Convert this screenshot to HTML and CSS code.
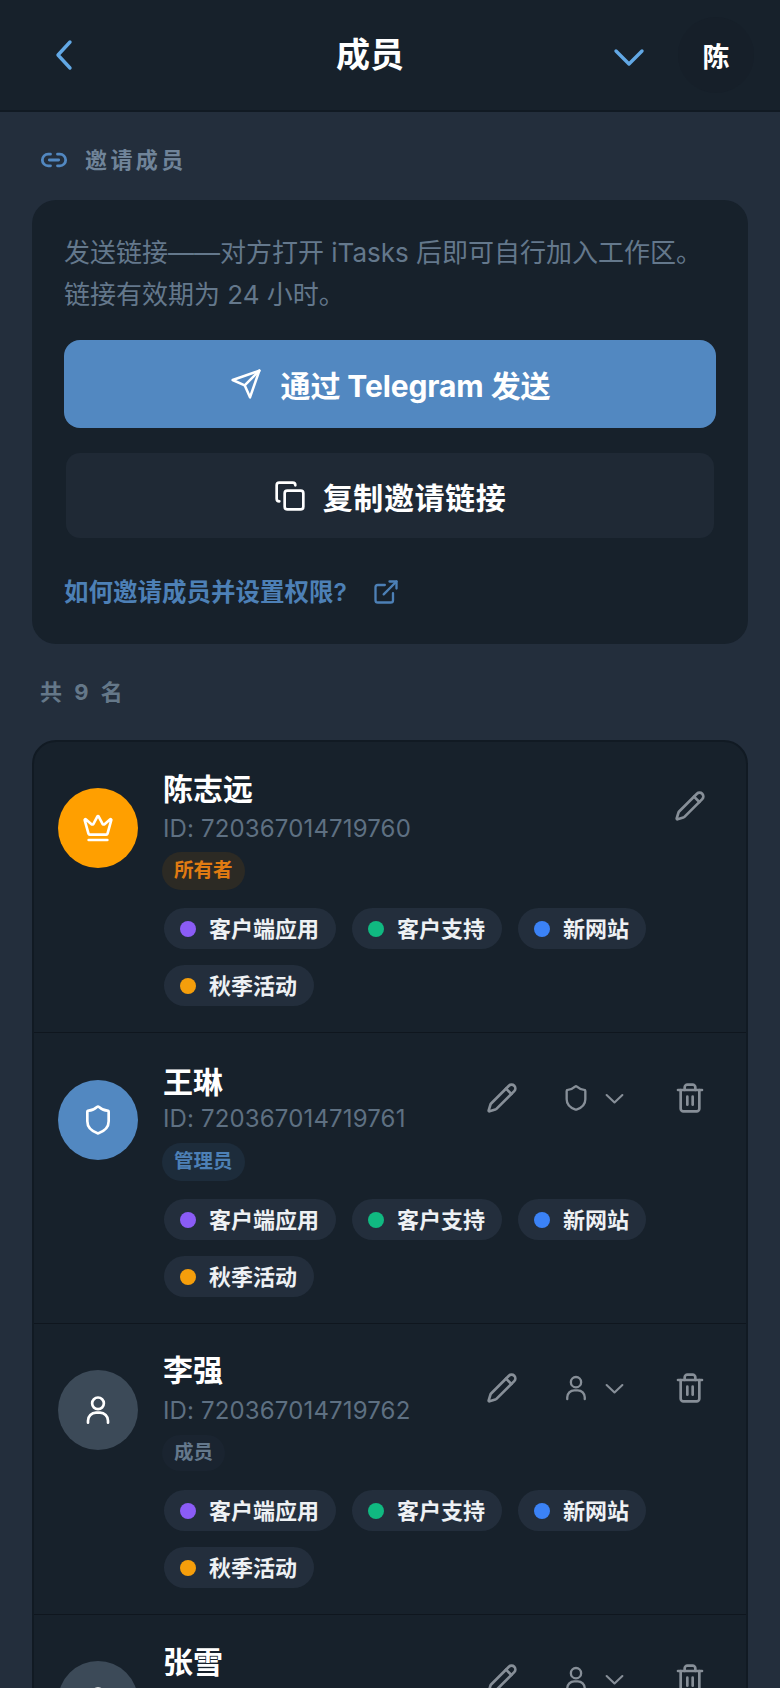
FILE: index.html
```html
<!DOCTYPE html>
<html lang="zh-CN">
<head>
<meta charset="utf-8">
<title>成员</title>
<link rel="stylesheet" href="styles.css">
</head>
<body>
<svg class="sprite" xmlns="http://www.w3.org/2000/svg">
  <symbol id="pencil" viewBox="0 0 24 24"><path d="M21.174 6.812a1 1 0 0 0-3.986-3.987L3.842 16.174a2 2 0 0 0-.5.83l-1.321 4.352a.5.5 0 0 0 .623.622l4.353-1.32a2 2 0 0 0 .83-.497z"/><path d="m15 5 4 4"/></symbol>
  <symbol id="shield" viewBox="0 0 24 24"><path d="M20 13c0 5-3.5 7.5-7.66 8.95a1 1 0 0 1-.67-.01C7.5 20.5 4 18 4 13V6a1 1 0 0 1 1-1c2 0 4.5-1.2 6.24-2.72a1.17 1.17 0 0 1 1.52 0C14.51 3.81 17 5 19 5a1 1 0 0 1 1 1z"/></symbol>
  <symbol id="user" viewBox="0 0 24 24"><circle cx="12" cy="7" r="4.4"/><path d="M4.5 21.5v-1.5a6 6 0 0 1 6-6h3a6 6 0 0 1 6 6v1.5"/></symbol>
  <symbol id="chev" viewBox="0 0 24 24"><path d="m3 8 9 8.5L21 8"/></symbol>
  <symbol id="trash" viewBox="0 0 24 24"><path d="M3 6h18"/><path d="M19 6v14c0 1-1 2-2 2H7c-1 0-2-1-2-2V6"/><path d="M8 6V4c0-1 1-2 2-2h4c1 0 2 1 2 2v2"/><path d="M10 11v6"/><path d="M14 11v6"/></symbol>
</svg>

<header class="topbar">
  <svg class="back" viewBox="0 0 20 32"><path d="M16 3 4 16l12 13"/></svg>
  <h1 class="title">成员</h1>
  <div class="top-right">
    <svg class="top-chev" viewBox="0 0 32 20"><path d="m3 3 13 13L29 3"/></svg>
    <div class="me">陈</div>
  </div>
</header>

<main class="page">
  <div class="section-label">
    <svg class="ic-link" viewBox="0 0 24 24"><path d="M9 17H7A5 5 0 0 1 7 7h2"/><path d="M15 7h2a5 5 0 1 1 0 10h-2"/><path d="M8 12h8"/></svg>
    <span>邀请成员</span>
  </div>

  <section class="invite">
    <p class="invite-text">发送链接——对方打开 iTasks 后即可自行加入工作区。<br>链接有效期为 24 小时。</p>
    <button class="btn btn-primary">
      <svg class="ic-send" viewBox="0 0 24 24"><path d="m22 2-7 20-4-9-9-4Z"/><path d="M22 2 11 13"/></svg>
      <span>通过 Telegram 发送</span>
    </button>
    <button class="btn btn-second">
      <svg class="ic-copy" viewBox="0 0 24 24"><rect x="8" y="8" width="14" height="14" rx="2"/><path d="M4 16c-1.1 0-2-.9-2-2V4c0-1.1.9-2 2-2h10c1.1 0 2 .9 2 2"/></svg>
      <span>复制邀请链接</span>
    </button>
    <a class="help">
      <span>如何邀请成员并设置权限?</span>
      <svg class="ic-ext" viewBox="0 0 24 24"><path d="M15 3h6v6"/><path d="M10 14 21 3"/><path d="M18 13v6a2 2 0 0 1-2 2H5a2 2 0 0 1-2-2V8a2 2 0 0 1 2-2h6"/></svg>
    </a>
  </section>

  <div class="count">共 9 名</div>

  <section class="members">
    <article class="member r1">
      <div class="avatar av-owner">
        <svg viewBox="0 0 24 24"><path d="M11.562 3.266a.5.5 0 0 1 .876 0L15.39 8.87a1 1 0 0 0 1.516.294L21.183 5.5a.5.5 0 0 1 .798.519l-2.834 10.246a1 1 0 0 1-.956.734H5.81a1 1 0 0 1-.957-.734L2.02 6.02a.5.5 0 0 1 .798-.519l4.276 3.664a1 1 0 0 0 1.516-.294z"/><path d="M5 21h14"/></svg>
      </div>
      <div class="body">
        <div class="head">
          <div class="info">
            <div class="name">陈志远</div>
            <div class="uid">ID: 720367014719760</div>
            <span class="badge b-owner">所有者</span>
          </div>
          <div class="actions">
            <svg class="act"><use href="#pencil"/></svg>
          </div>
        </div>
        <div class="chips">
          <span class="chip"><i class="dot d-purple"></i><span class="lbl">客户端应用</span></span>
          <span class="chip"><i class="dot d-green"></i><span class="lbl">客户支持</span></span>
          <span class="chip"><i class="dot d-blue"></i><span class="lbl">新网站</span></span>
          <span class="chip"><i class="dot d-orange"></i><span class="lbl">秋季活动</span></span>
        </div>
      </div>
    </article>

    <article class="member r2">
      <div class="avatar av-admin">
        <svg viewBox="0 0 24 24"><use href="#shield"/></svg>
      </div>
      <div class="body">
        <div class="head">
          <div class="info">
            <div class="name">王琳</div>
            <div class="uid">ID: 720367014719761</div>
            <span class="badge b-admin">管理员</span>
          </div>
          <div class="actions">
            <svg class="act"><use href="#pencil"/></svg>
            <div class="role"><svg class="role-ic"><use href="#shield"/></svg><svg class="role-chev"><use href="#chev"/></svg></div>
            <svg class="act"><use href="#trash"/></svg>
          </div>
        </div>
        <div class="chips">
          <span class="chip"><i class="dot d-purple"></i><span class="lbl">客户端应用</span></span>
          <span class="chip"><i class="dot d-green"></i><span class="lbl">客户支持</span></span>
          <span class="chip"><i class="dot d-blue"></i><span class="lbl">新网站</span></span>
          <span class="chip"><i class="dot d-orange"></i><span class="lbl">秋季活动</span></span>
        </div>
      </div>
    </article>

    <article class="member r3">
      <div class="avatar av-member">
        <svg viewBox="0 0 24 24"><use href="#user"/></svg>
      </div>
      <div class="body">
        <div class="head">
          <div class="info">
            <div class="name">李强</div>
            <div class="uid">ID: 720367014719762</div>
            <span class="badge b-member">成员</span>
          </div>
          <div class="actions">
            <svg class="act"><use href="#pencil"/></svg>
            <div class="role"><svg class="role-ic"><use href="#user"/></svg><svg class="role-chev"><use href="#chev"/></svg></div>
            <svg class="act"><use href="#trash"/></svg>
          </div>
        </div>
        <div class="chips">
          <span class="chip"><i class="dot d-purple"></i><span class="lbl">客户端应用</span></span>
          <span class="chip"><i class="dot d-green"></i><span class="lbl">客户支持</span></span>
          <span class="chip"><i class="dot d-blue"></i><span class="lbl">新网站</span></span>
          <span class="chip"><i class="dot d-orange"></i><span class="lbl">秋季活动</span></span>
        </div>
      </div>
    </article>

    <article class="member r4">
      <div class="avatar av-member">
        <svg viewBox="0 0 24 24"><use href="#user"/></svg>
      </div>
      <div class="body">
        <div class="head">
          <div class="info">
            <div class="name">张雪</div>
          </div>
          <div class="actions">
            <svg class="act"><use href="#pencil"/></svg>
            <div class="role"><svg class="role-ic"><use href="#user"/></svg><svg class="role-chev"><use href="#chev"/></svg></div>
            <svg class="act"><use href="#trash"/></svg>
          </div>
        </div>
      </div>
    </article>
  </section>
</main>
</body>
</html>
```

FILE: styles.css
```css
* { box-sizing: border-box; }
html, body { margin: 0; height: 1688px; overflow: hidden; }
body {
  background: #232e3c;
  color: #fff;
  font-family: Inter, "Noto Sans CJK SC", sans-serif;
}
svg { fill: none; stroke: currentColor; stroke-linecap: round; stroke-linejoin: round; flex: none; }
.sprite { display: none; }

.topbar {
  height: 112px;
  background: #17212b;
  border-bottom: 2px solid #111a23;
  display: flex;
  align-items: center;
  padding: 0 26px 0 54px;
}
.back { width: 20px; height: 32px; color: #62a8e5; stroke-width: 3.4; }
.title { margin: 0 0 0 262px; font-size: 34px; line-height: 40px; font-weight: 700; }
.top-right { margin-left: auto; display: flex; align-items: center; gap: 33px; }
.top-chev { width: 32px; height: 20px; margin-top: 6px; color: #62a8e5; stroke-width: 3.4; }
.me {
  width: 76px; height: 76px; border-radius: 50%;
  background: #161f29;
  display: flex; align-items: center; justify-content: center;
  font-size: 27px; font-weight: 700;
}

.page { padding: 0 32px; }
.section-label {
  display: flex; align-items: center; gap: 19px;
  height: 40px; margin: 28px 0 20px 8px;
  font-size: 22px; font-weight: 700; letter-spacing: 3.4px; color: #708499;
}
.section-label span { margin-top: -4px; }
.ic-link { width: 28px; height: 28px; color: #5288c1; stroke-width: 2.4; margin-right: -2px; }

.invite {
  background: #17212b;
  border-radius: 24px;
  padding: 32px;
  height: 444px;
}
.invite-text { margin: 0 0 24px; font-size: 26px; line-height: 42px; color: #64788c; }
.btn {
  width: 100%;
  display: flex; align-items: center; justify-content: center;
  border: 0; color: #fff;
  font-family: inherit; font-size: 30px; font-weight: 700;
}
.btn-primary { height: 88px; background: #5288c1; border-radius: 16px; gap: 19px; letter-spacing: -.1px; }
.btn-second {
  height: 85px; margin: 25px 2px 0; width: calc(100% - 4px);
  background: #1f2935; border-radius: 14px; gap: 17px;
  letter-spacing: .6px;
}
.ic-send { width: 32px; height: 32px; stroke-width: 1.9; }
.ic-copy { width: 32px; height: 32px; stroke-width: 2; }
.help {
  display: flex; align-items: center; gap: 25px;
  margin-top: 36px; height: 36px;
  font-size: 24.5px; font-weight: 600; color: #4d80b6;
}
.help span { margin-top: -4px; }
.ic-ext { width: 28px; height: 28px; stroke-width: 2; }

.count {
  margin: 32px 0 32px 8px; height: 32px; line-height: 32px;
  font-size: 22px; font-weight: 700; letter-spacing: 3.5px; color: #657889;
}

.members {
  background: #17212b;
  border: 2px solid #111a23;
  border-radius: 24px;
}
.member {
  display: flex; gap: 25px;
  padding: 28px 40px 26px 24px;
  border-bottom: 1px solid #0f161e;
}
.r2 { padding-top: 30px; }
.r3 { padding-top: 27px; }
.r4 { border-bottom: 0; padding-bottom: 200px; }

.avatar {
  width: 80px; height: 80px; border-radius: 50%;
  margin-top: 18px; flex: none;
  display: flex; align-items: center; justify-content: center;
  color: #fff;
}
.avatar svg { width: 32px; height: 32px; stroke-width: 2; }
.av-owner { background: #ff9f00; }
.av-admin { background: #5288c1; margin-top: 17px; }
.av-member { background: #3c4a58; }
.r3 .av-member { margin-top: 19px; }

.body { flex: 1; min-width: 0; }
.head { display: flex; justify-content: space-between; align-items: flex-start; }
.name { font-size: 30px; line-height: 38px; font-weight: 700; }
.uid { margin-top: 6px; font-size: 24px; letter-spacing: .15px; line-height: 30px; color: #5e7082; }
.r2 .uid { margin-top: 3px; }
.r3 .uid { margin-top: 7px; }
.badge {
  display: inline-block; height: 38px; margin-top: 8px; margin-left: -1px;
  padding: 0 12px; border-radius: 19px;
  font-size: 19.5px; line-height: 36px; font-weight: 600;
}
.r2 .badge { margin-top: 9px; }
.r3 .badge { margin-top: 9px; height: 36px; line-height: 34px; }
.b-owner { background: #2c2a24; color: #e07b12; }
.b-admin { background: #1d2c3b; color: #4d80b6; }
.b-member { background: #1a2430; color: #64788c; }

.actions { display: flex; align-items: center; margin-top: 20px; color: #878f98; }
.r2 .actions { margin-top: 19px; }
.r3 .actions { margin-top: 21px; }
.act { width: 32px; height: 32px; stroke-width: 2; }
.role { display: flex; align-items: center; gap: 14px; margin: 0 49px 0 44px; }
.role-ic { width: 28px; height: 28px; stroke-width: 2; }
.role-chev { width: 21px; height: 21px; stroke-width: 2.4; }

.chips { display: flex; flex-wrap: wrap; gap: 16px; margin-top: 18px; margin-left: 1px; }
.r3 .chips { margin-top: 19px; }
.chip {
  display: flex; align-items: center; gap: 13px;
  height: 41px; padding: 0 17px 0 16px;
  background: #232e3c; border-radius: 21px;
  font-size: 22px; font-weight: 600; color: #eef1f4;
}
.lbl { margin-top: -4px; }
.dot { width: 16px; height: 16px; border-radius: 50%; flex: none; }
.d-purple { background: #8b5cf6; }
.d-green { background: #10b981; }
.d-blue { background: #3b82f6; }
.d-orange { background: #f59e0b; }
```
